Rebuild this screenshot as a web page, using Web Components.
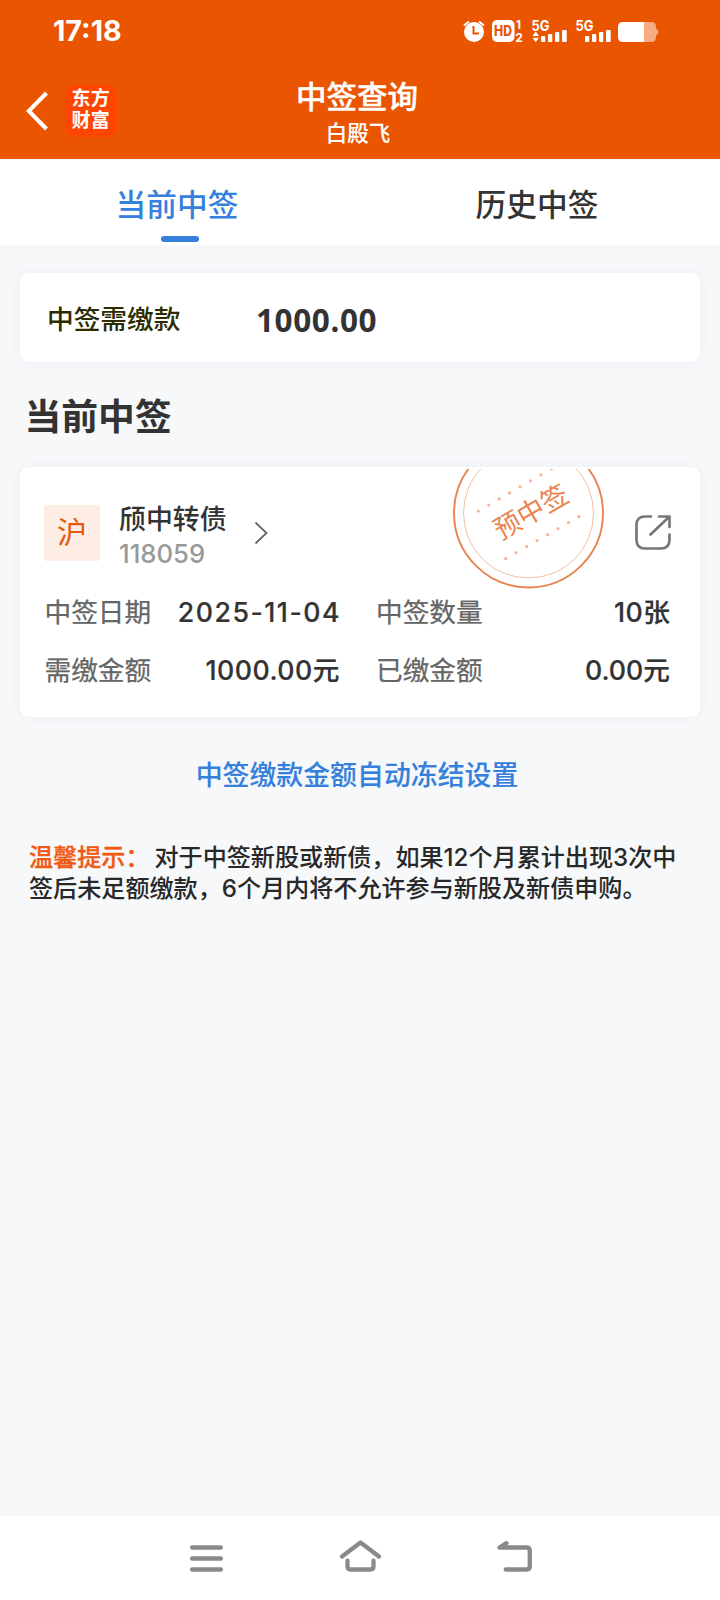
<!DOCTYPE html>
<html lang="zh-CN">
<head>
<meta charset="utf-8">
<title>中签查询</title>
<style>
html,body{margin:0;padding:0;background:#f6f8fa}
body{font-family:Inter,"Noto Sans CJK SC",sans-serif;color:#333;width:720px;height:1600px;overflow:hidden}
</style>
</head>
<body>
<lottery-page></lottery-page>
<script>
const define = (name, html) => customElements.define(name, class extends HTMLElement {
  constructor() {
    super();
    const t = document.createElement('template');
    t.innerHTML = html;
    this.attachShadow({mode: 'open'}).appendChild(t.content.cloneNode(true));
  }
});

define('status-bar', `
<style>
:host{display:flex;height:62px;align-items:center;box-sizing:border-box;padding:0 62px 0 53px;color:#fff;justify-content:space-between}
.time{font-size:28.700px;font-weight:700;line-height:62px}
svg{display:block}
text{font-family:Inter,sans-serif;font-weight:700;fill:#fff}
</style>
<span class="time">17:18</span>
<svg width="200" height="62" viewBox="458 0 200 62" fill="#fff">
  <circle cx="474" cy="32" r="10"/>
  <path d="M464 25.500l5-4M484 25.500l-5-4" stroke="#fff" stroke-width="2.200"/>
  <path d="M473.500 26v7.500h5.500" fill="none" stroke="#ea5502" stroke-width="2"/>
  <rect x="492" y="20" width="22.5" height="22" rx="5"/>
  <text x="494" y="36.300" font-size="14" textLength="18" lengthAdjust="spacingAndGlyphs" style="fill:#ea5502;font-weight:800">HD</text>
  <text x="516" y="29" font-size="11.500">1</text>
  <text x="515.300" y="41.700" font-size="12">2</text>
  <text x="531.500" y="31" font-size="14.500" textLength="18" lengthAdjust="spacingAndGlyphs" style="font-weight:700">5G</text>
  <path d="M532.500 36h6.500l-3.250-4.500zM532.500 37.800h6.500l-3.250 4.500z"/>
  <rect x="541" y="36" width="4.300" height="6" rx="1"/><rect x="548" y="34" width="4.300" height="8" rx="1"/><rect x="555" y="32" width="4.300" height="10" rx="1"/><rect x="562" y="30" width="4.700" height="12" rx="1"/>
  <text x="575.500" y="31" font-size="14.500" textLength="18" lengthAdjust="spacingAndGlyphs" style="font-weight:700">5G</text>
  <rect x="585" y="36" width="4.300" height="6" rx="1"/><rect x="592" y="34" width="4.300" height="8" rx="1"/><rect x="599" y="32" width="4.300" height="10" rx="1"/><rect x="606" y="30" width="4.700" height="12" rx="1"/>
  <path d="M644 22h7q5 0 5 5v2l2 1v4l-2 1v2q0 5-5 5h-7z" fill="#f8ab80"/>
  <path d="M623 22h21v20h-21q-5 0-5-5v-10q0-5 5-5z"/>
</svg>`);

define('app-logo', `
<style>
:host{display:grid;width:52px;height:52px;border-radius:10px;background:#ff4502;place-content:center;color:#fff}
span{font:600 19px/22px "Liberation Sans","Noto Sans CJK SC",sans-serif;width:39px;letter-spacing:.3px;padding-bottom:2px}
</style><span>东方<br>财富</span>`);

define('app-header', `
<style>
:host{display:grid;grid-template-columns:117px 1fr 117px;height:97px;color:#fff}
.left{display:flex;align-items:center;gap:17px;padding:0 0 0 26px;box-sizing:border-box;height:97px}
svg{display:block;flex:none}
.mid{display:flex;flex-direction:column;align-items:center;padding:15px 6px 0 0;box-sizing:border-box}
h1{margin:0;font-size:30.500px;font-weight:500;line-height:40px;-webkit-text-stroke:.4px #fff}
p{margin:0;font-size:21.500px;font-weight:500;line-height:32px;padding-left:2px;-webkit-text-stroke:.1px #fff}
</style>
<div class="left">
<svg width="22" height="40" viewBox="0 0 22 40" fill="none" stroke="#fff" stroke-width="4"><path d="M20.500 2L2.800 20L20.500 38"/></svg>
<app-logo></app-logo></div>
<div class="mid"><h1><slot></slot></h1><p><slot name="user"></slot></p></div>`);

define('tab-item', `
<style>
:host{display:flex;flex:1;flex-direction:column;align-items:center;color:#333;font-size:30.700px;font-weight:500}
span{line-height:76px;height:69px;padding:7px 6px 0 0}
i{display:none;width:38px;height:6px;border-radius:3px;background:#3580dc}
:host([active]){color:#3580dc}
:host([active]) i{display:block}
</style><span><slot></slot></span><i></i>`);

define('tab-bar', `
<style>
:host{display:flex;height:85px;margin-top:1px;background:#fff}
</style><slot></slot>`);

define('white-card', `
<style>
:host{display:block;margin:0 20px;background:#fff;border-radius:9px;box-shadow:0 0 12px rgba(60,80,110,.05)}
</style><slot></slot>`);

define('pay-summary', `
<style>
:host{display:flex;height:89px;align-items:center;padding-left:27px}
.k{width:209px;font-size:26.700px;font-weight:500;color:#2d2c00;line-height:40px;padding-top:2px}
.v{font-size:31.500px;font-weight:700;line-height:40px;padding-top:5px;letter-spacing:.600px;font-family:"Noto Sans",sans-serif}
</style><span class="k"><slot></slot></span><span class="v"><slot name="value"></slot></span>`);

define('section-title', `
<style>
:host{display:block;font-size:36.800px;font-weight:700;line-height:110px;height:105px;padding-left:24.500px;color:#333}
</style><slot></slot>`);

define('pre-stamp', `
<style>
:host{display:block;position:absolute;left:432px;top:2px;height:122px;overflow:hidden}
svg{display:block}
text{font-family:"Noto Sans CJK SC",sans-serif;font-size:27px;fill:#ea8450}
</style>
<svg width="153" height="122" viewBox="452 469 153 122" fill="none">
<circle cx="528.500" cy="513" r="74.500" stroke="#e6834e" stroke-width="1.900"/>
<circle cx="528.500" cy="513" r="65" stroke="#f0bea2" stroke-width="1"/>
<g stroke="#f3b493" stroke-width="3.200" stroke-linecap="round" stroke-dasharray="0 12.060">
<path d="M478.300 511L552 468.500"/><path d="M505.700 558.600L580 515.900"/></g>
<text transform="translate(530.700 511.500) rotate(-30)" text-anchor="middle" y="10">预中签</text>
</svg>`);

define('info-field', `
<style>
:host{display:flex;justify-content:space-between;line-height:58px;height:58px;font-size:26.700px;white-space:nowrap}
.k{color:#666;-webkit-text-stroke:.25px}
.v{color:#333;font-weight:500;letter-spacing:var(--track,0);margin-right:calc(-1*var(--track,0px));-webkit-text-stroke:.2px}
</style><span class="k"><slot></slot></span><span class="v"><slot name="value"></slot></span>`);

define('bond-card', `
<style>
:host{display:block;position:relative;height:250px;box-sizing:border-box;padding:38px 30px 0 24px}
.head{display:flex;height:95px;align-items:flex-start}
.mk{flex:none;width:56px;height:56px;border-radius:3px;background:#fdede4;color:#e2590f;font-size:30px;line-height:54px;text-align:center;font-weight:400}
.nm{margin-left:19px;width:135px;display:flex;flex-direction:column}
.nm b{font-size:26.900px;font-weight:500;line-height:28px;white-space:nowrap;margin-top:-.5px}
.nm em{font-style:normal;font-weight:500;font-size:25.700px;line-height:40px;color:#999;margin-top:1px}
svg{display:block;flex:none}
.go{margin-top:16px}
.share{margin:8px -2.500px 0 auto}
.grid{display:grid;grid-template-columns:295px 294px;column-gap:36.500px;margin-left:.500px;margin-top:-17px}
</style>
<pre-stamp></pre-stamp>
<div class="head">
<span class="mk">沪</span>
<div class="nm"><b><slot></slot></b><em><slot name="code"></slot></em></div>
<svg class="go" width="14" height="24" viewBox="0 0 14 24" fill="none" stroke="#666" stroke-width="1.800"><path d="M1.500 1.500L12.500 12L1.500 22.500"/></svg>
<svg class="share" width="40" height="40" viewBox="633 513 40 40" fill="none" stroke="#777" stroke-width="2.700" stroke-linecap="round" stroke-linejoin="round"><path d="M651 516.500h-6q-8.500 0-8.500 8.500v15q0 8.500 8.500 8.500h16q8.500 0 8.500-8.500v-5.500M659 516.500h10.500v10.500M669 517L650.500 534.500"/></svg>
</div>
<div class="grid"><slot name="fields"></slot></div>`);

define('bond-fields', `<style>:host{display:contents}</style><slot></slot>`);

define('freeze-link', `
<style>
:host{display:block;text-align:center;color:#3580dc;font-size:26.900px;font-weight:500;line-height:40px;margin-top:38px;padding-right:6px;-webkit-text-stroke:.1px}
</style><slot></slot>`);

define('warm-tip', `
<style>
:host{display:block;margin:47px 0 0 29px;font-size:24.100px;line-height:31px;font-weight:500;color:#282828;white-space:nowrap}
b{font-weight:500;color:#f05a14;margin-right:5px;-webkit-text-stroke:.3px}
</style><b><slot name="label"></slot></b><slot></slot>`);

define('nav-bar', `
<style>
:host{display:flex;height:84px;background:#fff;margin-top:auto;box-sizing:border-box;padding:21px 180px 0 184px}
svg{display:block;fill:none;stroke:#8a8a8a;stroke-width:4.700;stroke-linecap:round;stroke-linejoin:round}
.home{margin-left:108px}
.back{margin-left:112px}
</style>
<svg width="44" height="40" viewBox="184 1537 44 40"><path d="M192.300 1547.500h28.400M192.300 1558.500h28.400M192.300 1569.500h28.400"/></svg>
<svg class="home" width="48" height="40" viewBox="336 1537 48 40" style="stroke-width:4.300"><path d="M342 1556.500L360.500 1542.500L379 1556.500M347.500 1560.700v5.800q0 3 3 3h20q3 0 3-3v-5.800"/></svg>
<svg class="back" width="44" height="40" viewBox="496 1537 44 40" style="stroke-width:4.300"><path d="M506.500 1543.200L499.500 1547.500H526.500q3.300 0 3.300 3.300v15.400q0 3.300-3.300 3.300H505.700"/></svg>`);

define('lottery-page', `
<style>
:host{display:flex;flex-direction:column;width:720px;height:1600px;background:#f6f8fa}
.top{background:#ea5502;height:159px;flex:none}
.c1{margin-top:28px}
.date{--track:1.5px}
.num{--track:.500px}
</style>
<div class="top"><status-bar></status-bar><app-header>中签查询<span slot="user">白殿飞</span></app-header></div>
<tab-bar><tab-item active>当前中签</tab-item><tab-item>历史中签</tab-item></tab-bar>
<white-card class="c1"><pay-summary>中签需缴款<span slot="value">1000.00</span></pay-summary></white-card>
<section-title>当前中签</section-title>
<white-card><bond-card>颀中转债<span slot="code">118059</span>
<bond-fields slot="fields">
<info-field class="date">中签日期<span slot="value">2025-11-04</span></info-field>
<info-field class="num">中签数量<span slot="value">10张</span></info-field>
<info-field class="num">需缴金额<span slot="value">1000.00元</span></info-field>
<info-field>已缴金额<span slot="value">0.00元</span></info-field>
</bond-fields></bond-card></white-card>
<freeze-link>中签缴款金额自动冻结设置</freeze-link>
<warm-tip><span slot="label">温馨提示：</span>对于中签新股或新债，如果12个月累计出现3次中<br>签后未足额缴款，6个月内将不允许参与新股及新债申购。</warm-tip>
<nav-bar></nav-bar>`);
</script>
</body>
</html>
